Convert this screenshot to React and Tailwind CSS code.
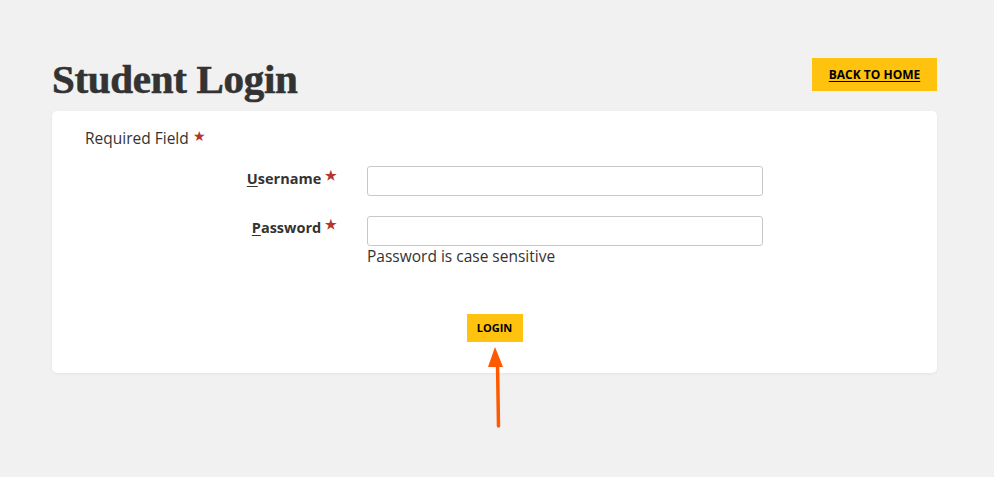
export default function App() {
  return (
    <div className="relative min-h-[477px] w-full bg-[#f1f1f1] text-[#333]" style={{ fontFamily: '"Open Sans", "Noto Sans", sans-serif' }}>
      <div className="ml-[52px] mr-[57px] pt-[57px]">
        <div className="flex items-end justify-between">
          <h1 className="mb-[3px] text-[41px] leading-[44px] font-bold tracking-[-0.3px] text-[#333]" style={{ fontFamily: '"Liberation Serif", "DejaVu Serif", serif', WebkitTextStroke: '0.6px #333' }}>
            Student Login
          </h1>
          <button className="mb-[13px] h-[33px] w-[125px] bg-[#ffc20e] text-[12px] font-bold text-black underline underline-offset-2">
            BACK TO HOME
          </button>
        </div>
        <div className="mt-[7px] rounded-[5px] bg-white px-[33px] pt-[17px] pb-[31px] shadow-[0_1px_3px_rgba(0,0,0,0.06)]">
          <div className="text-[15.5px] leading-[20px]">
            Required Field <span className="relative top-[-3px] text-[14px] text-[#b3362b]">★</span>
          </div>
          <div className="mt-[17px] flex items-center gap-[30px]">
            <label className="mt-[-4px] w-[252px] text-right text-[14.5px] font-bold">
              <span className="underline underline-offset-2">U</span>sername <span className="relative top-[-4px] text-[13px] text-[#b3362b]">★</span>
            </label>
            <input className="h-[30px] w-[396px] rounded-[3px] border border-[#c8c8c8] bg-white" />
          </div>
          <div className="mt-[20px] flex items-start gap-[30px]">
            <label className="mt-[1px] w-[252px] text-right text-[14.5px] font-bold">
              <span className="underline underline-offset-2">P</span>assword <span className="relative top-[-4px] text-[13px] text-[#b3362b]">★</span>
            </label>
            <div>
              <input type="password" className="h-[30px] w-[396px] rounded-[3px] border border-[#c8c8c8] bg-white" />
              <div className="mt-[0px] text-[15.5px] leading-[20px]">Password is case sensitive</div>
            </div>
          </div>
          <div className="mt-[48px] flex justify-center">
            <button className="h-[28px] w-[56px] bg-[#ffc20e] text-[11px] font-bold text-black">LOGIN</button>
          </div>
        </div>
      </div>
      <svg className="absolute left-[485px] top-[345px]" width="24" height="85" viewBox="0 0 24 85">
        <line x1="12.5" y1="18" x2="13.5" y2="81" stroke="#ff5a00" strokeWidth="3.5" strokeLinecap="round" />
        <polygon points="10,2 3,22 18,22" fill="#ff5a00" />
      </svg>
    </div>
  );
}
